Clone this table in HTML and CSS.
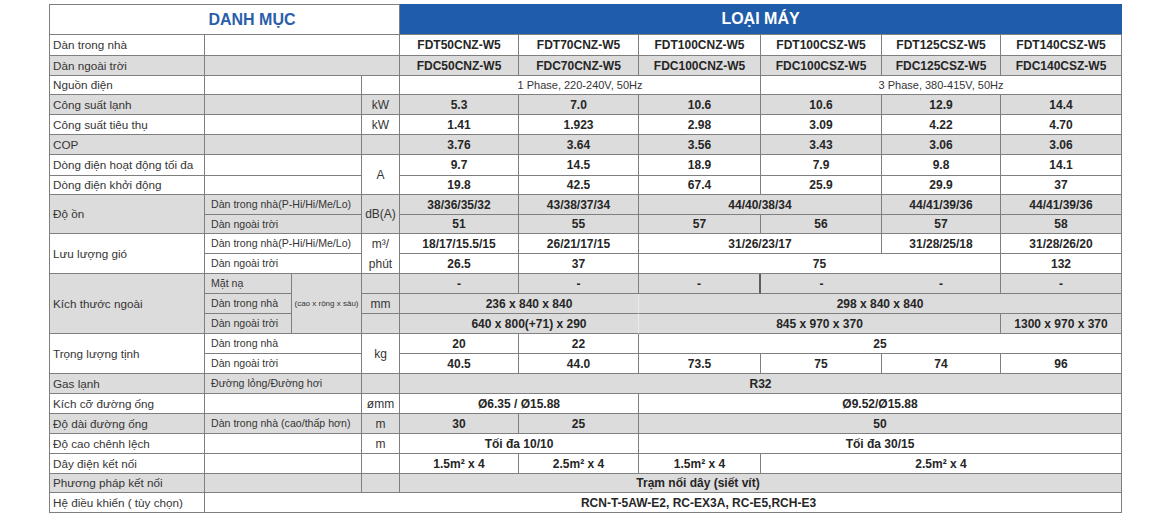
FILE: index.html
```html
<!DOCTYPE html>
<html lang="vi">
<head>
<meta charset="utf-8">
<title>Thông số kỹ thuật</title>
<link rel="stylesheet" href="styles.css">
</head>
<body>
<div class="spec">
  <!-- header -->
  <div class="c s4 hd-cat">DANH MỤC</div>
  <div class="c s6 hd-type">LOẠI MÁY</div>

  <!-- 1 -->
  <div class="c lbl">Dàn trong nhà</div>
  <div class="c s3"></div>
  <div class="c v">FDT50CNZ-W5</div><div class="c v">FDT70CNZ-W5</div><div class="c v">FDT100CNZ-W5</div>
  <div class="c v">FDT100CSZ-W5</div><div class="c v">FDT125CSZ-W5</div><div class="c v">FDT140CSZ-W5</div>

  <!-- 2 -->
  <div class="c lbl g">Dàn ngoài trời</div>
  <div class="c s3 g"></div>
  <div class="c v g">FDC50CNZ-W5</div><div class="c v g">FDC70CNZ-W5</div><div class="c v g">FDC100CNZ-W5</div>
  <div class="c v g">FDC100CSZ-W5</div><div class="c v g">FDC125CSZ-W5</div><div class="c v g">FDC140CSZ-W5</div>

  <!-- 3 -->
  <div class="c lbl">Nguồn điện</div>
  <div class="c s2"></div><div class="c"></div>
  <div class="c s3 ph">1 Phase, 220-240V, 50Hz</div>
  <div class="c s3 ph">3 Phase, 380-415V, 50Hz</div>

  <!-- 4 -->
  <div class="c lbl g">Công suất lạnh</div>
  <div class="c s2 g"></div><div class="c g">kW</div>
  <div class="c v g">5.3</div><div class="c v g">7.0</div><div class="c v g">10.6</div>
  <div class="c v g">10.6</div><div class="c v g">12.9</div><div class="c v g">14.4</div>

  <!-- 5 -->
  <div class="c lbl">Công suất tiêu thụ</div>
  <div class="c s2"></div><div class="c">kW</div>
  <div class="c v">1.41</div><div class="c v">1.923</div><div class="c v">2.98</div>
  <div class="c v">3.09</div><div class="c v">4.22</div><div class="c v">4.70</div>

  <!-- 6 -->
  <div class="c lbl g">COP</div>
  <div class="c s2 g"></div><div class="c g"></div>
  <div class="c v g">3.76</div><div class="c v g">3.64</div><div class="c v g">3.56</div>
  <div class="c v g">3.43</div><div class="c v g">3.06</div><div class="c v g">3.06</div>

  <!-- 7 -->
  <div class="c lbl">Dòng điện hoạt động tối đa</div>
  <div class="c s2"></div><div class="c r2">A</div>
  <div class="c v">9.7</div><div class="c v">14.5</div><div class="c v">18.9</div>
  <div class="c v">7.9</div><div class="c v">9.8</div><div class="c v">14.1</div>

  <!-- 8 -->
  <div class="c lbl">Dòng điện khởi động</div>
  <div class="c s2"></div>
  <div class="c v">19.8</div><div class="c v">42.5</div><div class="c v">67.4</div>
  <div class="c v">25.9</div><div class="c v">29.9</div><div class="c v">37</div>

  <!-- 9-10 -->
  <div class="c lbl g r2">Độ ồn</div>
  <div class="c s2 sub g">Dàn trong nhà(P-Hi/Hi/Me/Lo)</div>
  <div class="c g r2">dB(A)</div>
  <div class="c v g">38/36/35/32</div><div class="c v g">43/38/37/34</div>
  <div class="c v g s2">44/40/38/34</div>
  <div class="c v g">44/41/39/36</div><div class="c v g">44/41/39/36</div>

  <div class="c s2 sub g">Dàn ngoài trời</div>
  <div class="c v g">51</div><div class="c v g">55</div><div class="c v g">57</div>
  <div class="c v g">56</div><div class="c v g">57</div><div class="c v g">58</div>

  <!-- 11-12 -->
  <div class="c lbl r2">Lưu lượng gió</div>
  <div class="c s2 sub">Dàn trong nhà(P-Hi/Hi/Me/Lo)</div>
  <div class="c r2"><span class="stack">m³/<br>phút</span></div>
  <div class="c v">18/17/15.5/15</div><div class="c v">26/21/17/15</div>
  <div class="c v s2">31/26/23/17</div>
  <div class="c v">31/28/25/18</div><div class="c v">31/28/26/20</div>

  <div class="c s2 sub">Dàn ngoài trời</div>
  <div class="c v">26.5</div><div class="c v">37</div>
  <div class="c v s3">75</div>
  <div class="c v">132</div>

  <!-- 13-15 -->
  <div class="c lbl g r3">Kích thước ngoài</div>
  <div class="c sub g">Mặt nạ</div>
  <div class="c g r3 tiny">(cao x rộng x sâu)</div>
  <div class="c g"></div>
  <div class="c v g">-</div><div class="c v g">-</div><div class="c v g thick">-</div>
  <div class="c v g nr">-</div><div class="c v g">-</div><div class="c v g">-</div>

  <div class="c sub g">Dàn trong nhà</div>
  <div class="c g">mm</div>
  <div class="c v g s2 fr off">236 x 840 x 840</div>
  <div class="c v g s4">298 x 840 x 840</div>

  <div class="c sub g">Dàn ngoài trời</div>
  <div class="c g"></div>
  <div class="c v g s2 fr off">640 x 800(+71) x 290</div>
  <div class="c v g s3">845 x 970 x 370</div>
  <div class="c v g">1300 x 970 x 370</div>

  <!-- 16-17 -->
  <div class="c lbl r2">Trọng lượng tịnh</div>
  <div class="c s2 sub">Dàn trong nhà</div>
  <div class="c r2">kg</div>
  <div class="c v">20</div><div class="c v">22</div>
  <div class="c v s4">25</div>

  <div class="c s2 sub">Dàn ngoài trời</div>
  <div class="c v">40.5</div><div class="c v">44.0</div><div class="c v">73.5</div>
  <div class="c v">75</div><div class="c v">74</div><div class="c v">96</div>

  <!-- 18 -->
  <div class="c lbl g">Gas lạnh</div>
  <div class="c s2 sub g">Đường lỏng/Đường hơi</div>
  <div class="c g"></div>
  <div class="c v g s6">R32</div>

  <!-- 19 -->
  <div class="c lbl">Kích cỡ đường ống</div>
  <div class="c s2"></div><div class="c">ømm</div>
  <div class="c v s2">Ø6.35 / Ø15.88</div>
  <div class="c v s4">Ø9.52/Ø15.88</div>

  <!-- 20 -->
  <div class="c lbl g">Độ dài đường ống</div>
  <div class="c s2 sub g">Dàn trong nhà (cao/thấp hơn)</div>
  <div class="c g">m</div>
  <div class="c v g">30</div><div class="c v g">25</div>
  <div class="c v g s4">50</div>

  <!-- 21 -->
  <div class="c lbl">Độ cao chênh lệch</div>
  <div class="c s2"></div><div class="c">m</div>
  <div class="c v s2">Tối đa 10/10</div>
  <div class="c v s4">Tối đa 30/15</div>

  <!-- 22 -->
  <div class="c lbl">Dây điện kết nối</div>
  <div class="c s2"></div><div class="c"></div>
  <div class="c v">1.5m² x 4</div><div class="c v">2.5m² x 4</div><div class="c v">1.5m² x 4</div>
  <div class="c v s3">2.5m² x 4</div>

  <!-- 23 -->
  <div class="c lbl g">Phương pháp kết nối</div>
  <div class="c s2 g"></div><div class="c g"></div>
  <div class="c v g s6 shift-l">Trạm nối dây (siết vít)</div>

  <!-- 24 -->
  <div class="c lbl">Hệ điều khiển ( tùy chọn)</div>
  <div class="c v s9 shift-r">RCN-T-5AW-E2, RC-EX3A, RC-E5,RCH-E3</div>
</div>
</body>
</html>
```

FILE: styles.css
```css
* {
  box-sizing: border-box;
}

html,
body {
  margin: 0;
  padding: 0;
  background: #ffffff;
}

body {
  padding: 4px 0 0 49px;
  font-family: "Liberation Sans", Arial, sans-serif;
  font-size: 12px;
  color: #353535;
}

.spec {
  display: grid;
  width: 1073px;
  grid-template-columns: 156px 87px 70px 38px 119px 120px 122px 121px 119px 121px;
  grid-template-rows: 31px 21px 20px 19px 20px 20px 20px 21px 19px 20px 19px 20px 20px 20px 20px 20px 20px 20px 20px 20px 20px 20px 20px 19px 20px;
}

.c {
  display: flex;
  align-items: center;
  justify-content: center;
  border-right: 1px solid #7f7f7f;
  border-bottom: 1px solid #7f7f7f;
  white-space: nowrap;
  line-height: 1;
  overflow: hidden;
}

.lbl {
  justify-content: flex-start;
  padding-left: 3px;
  border-left: 1px solid #7f7f7f;
  font-size: 11.7px;
}

.sub {
  justify-content: flex-start;
  padding-left: 6px;
  font-size: 10.6px;
}

.ph {
  font-size: 11px;
}

.v {
  font-weight: bold;
  color: #262626;
}

.g {
  background: #dcdcdc;
}

.s2 { grid-column: span 2; }
.s3 { grid-column: span 3; }
.s4 { grid-column: span 4; }
.s6 { grid-column: span 6; }
.s9 { grid-column: span 9; }
.r2 { grid-row: span 2; }
.r3 { grid-row: span 3; }

.hd-cat {
  border-top: 1px solid #7f7f7f;
  border-left: 1px solid #7f7f7f;
  padding-left: 55px;
  font-size: 16px;
  font-weight: bold;
  color: #2a5eab;
}

.hd-type {
  background: #1f5ca9;
  border-right-color: #1f5ca9;
  font-size: 16px;
  font-weight: bold;
  color: #ffffff;
}

.stack {
  display: block;
  text-align: center;
  line-height: 20px;
}

.tiny {
  font-size: 8px;
}

.thick {
  border-right: 2px solid #5e5e5e;
}

.nr {
  border-right: none;
}

.fr {
  border-right-color: #e9e9e9;
}

.off {
  padding-left: 20px;
}

.shift-l {
  padding-right: 125px;
}

.shift-r {
  padding-left: 71px;
}
```
